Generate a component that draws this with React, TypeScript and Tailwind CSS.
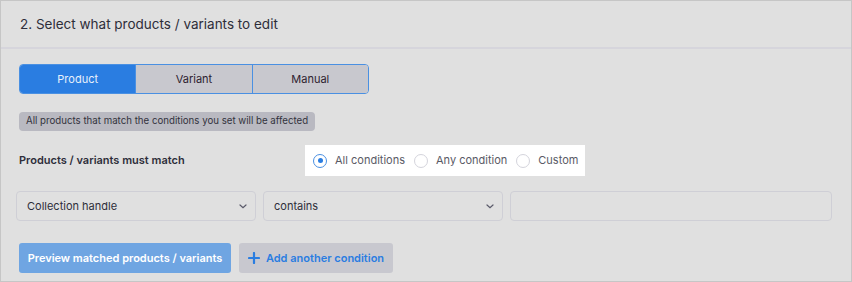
import React, { useState } from "react";

const font = { fontFamily: "Inter, 'Noto Sans', sans-serif" };

const Chevron = () => (
  <svg width="8" height="5" viewBox="0 0 8 5" fill="none">
    <path d="M1 1L4 3.8L7 1" stroke="#5a5a6a" strokeWidth="1.2" strokeLinecap="round" />
  </svg>
);

const Radio: React.FC<{ checked: boolean; label: string; onClick: () => void }> = ({ checked, label, onClick }) => (
  <div className="flex items-center gap-[8px] cursor-pointer whitespace-nowrap" onClick={onClick}>
    <span
      className={`w-[14px] h-[14px] shrink-0 rounded-full border flex items-center justify-center ${
        checked ? "border-[#4a90e2]" : "border-[#d4d4dc]"
      }`}
    >
      {checked && <span className="w-[5px] h-[5px] rounded-full bg-[#2a7de1]" />}
    </span>
    <span className="text-[11px] text-[#5a5a66]">{label}</span>
  </div>
);

const App: React.FC = () => {
  const [tab, setTab] = useState("Product");
  const [match, setMatch] = useState("All conditions");
  const tabs = ["Product", "Variant", "Manual"];

  return (
    <div className="w-[852px] h-[282px] border border-[#c6c6c6] bg-[#e0e0e0] overflow-hidden" style={font}>
      <div className="h-[48px] flex items-center pt-[1px] px-[19px] border-b-2 border-[#d6d5dc]">
        <p className="text-[13.5px] text-[#2e2e3a]">2. Select what products / variants to edit</p>
      </div>

      <div className="pl-[18px] pr-[19px] pt-[15px]">
        <div className="flex w-[350px] h-[30px] rounded-[4px] border border-[#4a90e2] overflow-hidden">
          {tabs.map((t, i) => (
            <div
              key={t}
              onClick={() => setTab(t)}
              className={`flex-1 flex items-center justify-center text-[11px] cursor-pointer ${
                i > 0 ? "border-l border-[#4a90e2]" : ""
              } ${tab === t ? "bg-[#2a7de1] text-[#e8f0fb]" : "bg-[#c8c8ce] text-[#2e2230]"}`}
            >
              {t}
            </div>
          ))}
        </div>

        <div className="mt-[18px] inline-flex h-[19px] items-center px-[7px] rounded-[4px] bg-[#b9b9c1] text-[9.7px] text-[#33333d]">
          All products that match the conditions you set will be affected
        </div>

        <div className="mt-[14px] flex items-center">
          <p className="w-[286px] text-[11px] font-semibold text-[#2e2e3a]">Products / variants must match</p>
          <div className="flex items-center gap-[9px] bg-white h-[31px] pl-[8px] w-[280px]">
            {["All conditions", "Any condition", "Custom"].map((m) => (
              <Radio key={m} label={m} checked={match === m} onClick={() => setMatch(m)} />
            ))}
          </div>
        </div>
      </div>

      <div className="mt-[15px] pl-[15px] pr-[19px] flex gap-[7px]">
        <div className="w-[240px] h-[30px] rounded-[4px] border border-[#cfcfd6] flex items-center justify-between pl-[10px] pr-[8px]">
          <span className="text-[11px] text-[#2e2e3a]">Collection handle</span>
          <Chevron />
        </div>
        <div className="w-[240px] h-[30px] rounded-[4px] border border-[#cfcfd6] flex items-center justify-between pl-[10px] pr-[8px]">
          <span className="text-[11px] text-[#2e2e3a]">contains</span>
          <Chevron />
        </div>
        <div className="flex-1 h-[30px] rounded-[4px] border border-[#cfcfd6]" />
      </div>

      <div className="mt-[22px] pl-[18px] flex gap-[8px]">
        <button className="w-[212px] h-[30px] rounded-[3px] bg-[#6fa5e2] text-white text-[11px] font-semibold flex items-center justify-center">
          Preview matched products / variants
        </button>
        <button className="w-[154px] h-[30px] rounded-[3px] bg-[#c8c8cf] text-[#2a7de1] text-[11px] font-semibold flex items-center justify-center gap-[6px]">
          <svg width="12" height="12" viewBox="0 0 12 12">
            <path d="M6 1v10M1 6h10" stroke="#2a7de1" strokeWidth="2.2" strokeLinecap="round" />
          </svg>
          Add another condition
        </button>
      </div>
    </div>
  );
};

export default App;
